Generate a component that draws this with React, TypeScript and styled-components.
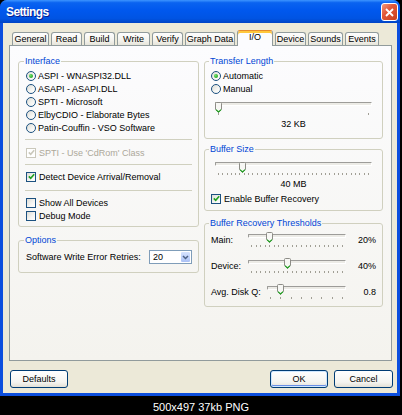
import { FC, ReactNode } from 'react';
import styled, { createGlobalStyle, css } from 'styled-components';

const GlobalStyle = createGlobalStyle`
  html, body {
    margin: 0;
    padding: 0;
    background: #000;
  }
  body {
    font-family: "Liberation Sans", Arial, sans-serif;
    font-size: 9px;
    color: #000;
  }
  * {
    box-sizing: border-box;
  }
`;

const Page = styled.div`
  width: 402px;
  height: 415px;
  background: #000;
  display: flex;
  flex-direction: column;
`;

const Window = styled.div`
  width: 400px;
  height: 396px;
  display: flex;
  flex-direction: column;
  background: #0b4ede;
  border-radius: 7px 7px 0 0;
  overflow: hidden;
`;

const TitleBar = styled.div`
  height: 23px;
  flex: none;
  display: flex;
  align-items: center;
  justify-content: space-between;
  padding: 0 2px 0 6px;
  background: linear-gradient(
    to bottom,
    #3d95ff 0%,
    #0a63f0 12%,
    #0058ee 45%,
    #0054e3 80%,
    #0043c4 100%
  );
`;

const Title = styled.span`
  font-weight: bold;
  font-size: 12px;
  letter-spacing: -0.6px;
  color: #fff;
  text-shadow: 1px 1px 0 #0a1c8c;
`;

const CloseButton = styled.div`
  width: 17px;
  height: 18px;
  margin-top: 1px;
  border: 1px solid #fff;
  border-radius: 3px;
  background: linear-gradient(135deg, #f19a7c 0%, #e2593a 40%, #c8401c 100%);
  display: flex;
  align-items: center;
  justify-content: center;
`;

const Body = styled.div`
  flex: 1;
  margin: 0 3px 3px;
  background: #ece9d8;
  padding: 7px 5px 0 6px;
  display: flex;
  flex-direction: column;
`;

const TabStrip = styled.div`
  height: 15px;
  display: flex;
  align-items: flex-end;
  gap: 2px;
  padding-left: 3px;
`;

const Tab = styled.div<{ $w: number; $active?: boolean }>`
  width: ${(p) => p.$w}px;
  height: 13px;
  border: 1px solid #919b9c;
  border-bottom: none;
  border-radius: 3px 3px 0 0;
  background: linear-gradient(to bottom, #fefefe 0%, #f4f3ee 60%, #e6e4da 100%);
  text-align: center;
  line-height: 12px;
  white-space: nowrap;
  ${(p) =>
    p.$active &&
    css`
      position: relative;
      z-index: 1;
      height: 16px;
      margin-bottom: -1px;
      background: #fcfcfe;
      border-top: 1px solid #e68b2c;
      box-shadow: inset 0 2px 0 #ffc83c;
      line-height: 13px;
    `}
`;

const Panel = styled.div`
  height: 316px;
  border: 1px solid #919b9c;
  background: linear-gradient(to bottom, #fcfcfe 0%, #f4f3ee 100%);
  padding: 10px 8px 0 8px;
  display: grid;
  grid-template-columns: 181px 179px;
  column-gap: 5px;
  align-items: start;
`;

const Column = styled.div`
  display: flex;
  flex-direction: column;
`;

const GroupBox = styled.fieldset<{ $mt?: number; $pt: number; $pb: number; $px?: number }>`
  margin: ${(p) => p.$mt ?? 0}px 0 0 0;
  min-width: 0;
  border: 1px solid #d0d0bf;
  border-radius: 3px;
  padding: ${(p) => p.$pt}px ${(p) => p.$px ?? 7}px ${(p) => p.$pb}px;
`;

const Legend = styled.legend`
  color: #0046d5;
  padding: 0 1px;
  margin-left: -2px;
  line-height: 11px;
  font-size: 9px;
`;

const OptionRow = styled.div<{ $disabled?: boolean; $mt?: number }>`
  height: 13px;
  margin-top: ${(p) => p.$mt ?? 0}px;
  display: flex;
  align-items: center;
  gap: 2px;
  white-space: nowrap;
  color: ${(p) => (p.$disabled ? '#aca899' : '#000')};
`;

const RadioCircle = styled.span<{ $on?: boolean }>`
  width: 10px;
  height: 10px;
  flex: none;
  border: 1px solid #1c5180;
  border-radius: 50%;
  background: linear-gradient(135deg, #dcdcd5 0%, #f6f6f3 60%, #fff 100%);
  display: flex;
  align-items: center;
  justify-content: center;
  &::after {
    content: '';
    display: ${(p) => (p.$on ? 'block' : 'none')};
    width: 4px;
    height: 4px;
    border-radius: 50%;
    background: radial-gradient(circle at 35% 35%, #6fe36b 0%, #21a121 80%);
  }
`;

const CheckSquare = styled.span<{ $disabled?: boolean }>`
  width: 10px;
  height: 10px;
  flex: none;
  margin-right: 1px;
  border: 1px solid ${(p) => (p.$disabled ? '#cac8bb' : '#1c5180')};
  background: ${(p) =>
    p.$disabled ? '#fff' : 'linear-gradient(135deg, #dcdcd7 0%, #f6f6f3 60%, #fff 100%)'};
  display: flex;
  align-items: center;
  justify-content: center;
`;

const Separator = styled.div<{ $mt: number; $mb: number }>`
  height: 1px;
  margin: ${(p) => p.$mt}px -1px ${(p) => p.$mb}px;
  background: #d0d0bf;
`;

const CenterLabel = styled.div<{ $mt: number }>`
  margin-top: ${(p) => p.$mt}px;
  line-height: 11px;
  text-align: center;
`;

const SliderBox = styled.div<{ $w: number; $mx?: number; $mt?: number }>`
  position: relative;
  width: ${(p) => p.$w}px;
  height: 15px;
  margin: ${(p) => p.$mt ?? 0}px ${(p) => p.$mx ?? 0}px 0;
  flex: none;
`;

const Track = styled.div`
  margin-top: 2px;
  height: 4px;
  border: 1px solid #9d9c99;
  border-right-color: #fff;
  border-bottom-color: #fff;
  background: #ecebe6;
  border-radius: 1px;
`;

const Thumb = styled.svg`
  position: absolute;
  top: 0;
`;

const Ticks = styled.div`
  margin-top: 7px;
  height: 2px;
  padding: 0 3px;
  display: flex;
  justify-content: space-between;
`;

const Tick = styled.span`
  width: 1px;
  height: 2px;
  background: #a19f95;
`;

const ThresholdRow = styled.div<{ $mt?: number }>`
  display: flex;
  align-items: flex-start;
  margin-top: ${(p) => p.$mt ?? 0}px;
`;

const RowLabel = styled.span<{ $w: number }>`
  width: ${(p) => p.$w}px;
  flex: none;
  margin-top: 3px;
  line-height: 11px;
  white-space: nowrap;
`;

const RowValue = styled.span`
  flex: 1;
  margin-top: 3px;
  line-height: 11px;
  text-align: right;
`;

const RetryRow = styled.div`
  height: 14px;
  display: flex;
  align-items: center;
  justify-content: space-between;
  margin-right: -1px;
`;

const Select = styled.div`
  width: 43px;
  height: 14px;
  border: 1px solid #7f9db9;
  background: #fff;
  display: flex;
  align-items: stretch;
`;

const SelectText = styled.span`
  flex: 1;
  padding-left: 3px;
  line-height: 12px;
`;

const SelectArrow = styled.span`
  width: 11px;
  border: 1px solid #fff;
  border-radius: 2px;
  background: linear-gradient(to bottom, #d6e3fe 0%, #bdd0fa 60%, #aac0f4 100%);
  display: flex;
  align-items: center;
  justify-content: center;
`;

const ButtonRow = styled.div`
  height: 18px;
  margin: 9px -1px 0 1px;
  display: flex;
  gap: 6px;
`;

const Button = styled.div<{ $w: number; $default?: boolean; $push?: boolean }>`
  width: ${(p) => p.$w}px;
  height: 18px;
  border: 1px solid #003c74;
  border-radius: 3px;
  background: linear-gradient(to bottom, #ffffff 0%, #f4f4f0 70%, #e3e0d6 100%);
  display: flex;
  align-items: center;
  justify-content: center;
  margin-left: ${(p) => (p.$push ? 'auto' : '0')};
  ${(p) =>
    p.$default &&
    css`
      box-shadow: inset 0 0 0 1px #cee7ff, inset 0 -1px 0 1px #6a8fe6;
    `}
`;

const Caption = styled.div`
  flex: 1;
  color: #fff;
  font-size: 11px;
  text-align: center;
  padding-top: 5px;
`;

type SliderProps = {
  width: number;
  value: number;
  ticks: number;
  mx?: number;
  mt?: number;
};

const Slider: FC<SliderProps> = ({ width, value, ticks, mx, mt }) => (
  <SliderBox $w={width} $mx={mx} $mt={mt}>
    <Track />
    <Thumb
      width="7"
      height="11"
      viewBox="0 0 7 11"
      style={{ left: Math.round(value * (width - 7)) }}
    >
      <path
        d="M0.5 1.5 Q0.5 0.5 1.5 0.5 H5.5 Q6.5 0.5 6.5 1.5 V7.5 L3.5 10.5 L0.5 7.5 Z"
        fill="#f7f7f4"
        stroke="#8d8c87"
      />
      <path d="M1 7.6 L3.5 10 L6 7.6" fill="none" stroke="#21a121" strokeWidth="1.2" />
    </Thumb>
    <Ticks>
      {Array.from({ length: ticks }, (_, i) => (
        <Tick key={i} />
      ))}
    </Ticks>
  </SliderBox>
);

const Radio: FC<{ on?: boolean; children: ReactNode }> = ({ on, children }) => (
  <OptionRow>
    <RadioCircle $on={on} />
    {children}
  </OptionRow>
);

const Check: FC<{ on?: boolean; disabled?: boolean; mt?: number; children: ReactNode }> = ({
  on,
  disabled,
  mt,
  children,
}) => (
  <OptionRow $disabled={disabled} $mt={mt}>
    <CheckSquare $disabled={disabled}>
      {on && (
        <svg width="7" height="7" viewBox="0 0 7 7">
          <path
            d="M0.8 3.4 L2.7 5.3 L6.2 1.2"
            fill="none"
            stroke={disabled ? '#cac8bb' : '#21a121'}
            strokeWidth="1.6"
          />
        </svg>
      )}
    </CheckSquare>
    {children}
  </OptionRow>
);

const tabs = [
  { label: 'General', w: 37 },
  { label: 'Read', w: 31 },
  { label: 'Build', w: 31 },
  { label: 'Write', w: 33 },
  { label: 'Verify', w: 31 },
  { label: 'Graph Data', w: 50 },
  { label: 'I/O', w: 36, active: true },
  { label: 'Device', w: 31 },
  { label: 'Sounds', w: 35 },
  { label: 'Events', w: 34 },
];

const App: FC = () => (
  <Page>
    <GlobalStyle />
    <Window>
      <TitleBar>
        <Title>Settings</Title>
        <CloseButton>
          <svg width="9" height="9" viewBox="0 0 9 9">
            <path d="M1 1 L8 8 M8 1 L1 8" stroke="#fff" strokeWidth="1.8" />
          </svg>
        </CloseButton>
      </TitleBar>
      <Body>
        <TabStrip>
          {tabs.map((t) => (
            <Tab key={t.label} $w={t.w} $active={t.active}>
              {t.label}
            </Tab>
          ))}
        </TabStrip>
        <Panel>
          <Column>
            <GroupBox $pt={2} $pb={4}>
              <Legend>Interface</Legend>
              <Radio on>ASPI - WNASPI32.DLL</Radio>
              <Radio>ASAPI - ASAPI.DLL</Radio>
              <Radio>SPTI - Microsoft</Radio>
              <Radio>ElbyCDIO - Elaborate Bytes</Radio>
              <Radio>Patin-Couffin - VSO Software</Radio>
              <Separator $mt={5} $mb={6} />
              <Check on disabled>
                SPTI - Use 'CdRom' Class
              </Check>
              <Separator $mt={5} $mb={5} />
              <Check on>Detect Device Arrival/Removal</Check>
              <Separator $mt={7} $mb={5} />
              <Check>Show All Devices</Check>
              <Check>Debug Mode</Check>
            </GroupBox>
            <GroupBox $mt={8} $pt={4} $pb={8}>
              <Legend>Options</Legend>
              <RetryRow>
                <span>Software Write Error Retries:</span>
                <Select>
                  <SelectText>20</SelectText>
                  <SelectArrow>
                    <svg width="7" height="5" viewBox="0 0 7 5">
                      <path d="M1 1 L3.5 3.5 L6 1" fill="none" stroke="#4d6185" strokeWidth="1.5" />
                    </svg>
                  </SelectArrow>
                </Select>
              </RetryRow>
            </GroupBox>
          </Column>
          <Column>
            <GroupBox $pt={2} $pb={8} $px={6}>
              <Legend>Transfer Length</Legend>
              <Radio on>Automatic</Radio>
              <Radio>Manual</Radio>
              <Slider width={157} value={0} ticks={2} mx={4} mt={7} />
              <CenterLabel $mt={2}>32 KB</CenterLabel>
            </GroupBox>
            <GroupBox $mt={5} $pt={5} $pb={5} $px={6}>
              <Legend>Buffer Size</Legend>
              <Slider width={157} value={0.16} ticks={36} mx={4} />
              <CenterLabel $mt={2}>40 MB</CenterLabel>
              <Check on mt={2}>
                Enable Buffer Recovery
              </Check>
            </GroupBox>
            <GroupBox $mt={7} $pt={3} $pb={7} $px={6}>
              <Legend>Buffer Recovery Thresholds</Legend>
              <ThresholdRow>
                <RowLabel $w={37}>Main:</RowLabel>
                <Slider width={98} value={0.2} ticks={21} />
                <RowValue>20%</RowValue>
              </ThresholdRow>
              <ThresholdRow $mt={11}>
                <RowLabel $w={37}>Device:</RowLabel>
                <Slider width={98} value={0.4} ticks={21} />
                <RowValue>40%</RowValue>
              </ThresholdRow>
              <ThresholdRow $mt={11}>
                <RowLabel $w={56}>Avg. Disk Q:</RowLabel>
                <Slider width={79} value={0.14} ticks={8} />
                <RowValue>0.8</RowValue>
              </ThresholdRow>
            </GroupBox>
          </Column>
        </Panel>
        <ButtonRow>
          <Button $w={58}>Defaults</Button>
          <Button $w={58} $default $push>
            OK
          </Button>
          <Button $w={59}>Cancel</Button>
        </ButtonRow>
      </Body>
    </Window>
    <Caption>500x497 37kb PNG</Caption>
  </Page>
);

export default App;
